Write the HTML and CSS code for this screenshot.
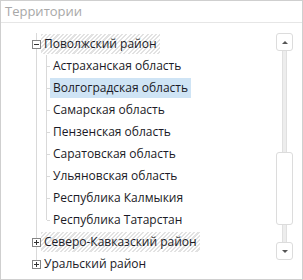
FILE: index.html
```html
<!DOCTYPE html>
<html lang="ru">
<head>
    <meta charset="UTF-8">
    <meta name="viewport" content="width=device-width, initial-scale=1.0">
    <title>Территории</title>
    <link rel="stylesheet" href="styles.css">
</head>
<body>
    <div class="panel">
        <div class="panel-title">Территории</div>
        <div class="panel-body">
            <div class="tree">
                <ul class="tree-root">
                    <li class="node">
                        <div class="row"><span class="toggle minus"></span><span class="label group">Поволжский район</span></div>
                        <ul class="tree-children">
                            <li class="leaf"><div class="row"><span class="label">Астраханская область</span></div></li>
                            <li class="leaf"><div class="row"><span class="label selected">Волгоградская область</span></div></li>
                            <li class="leaf"><div class="row"><span class="label">Самарская область</span></div></li>
                            <li class="leaf"><div class="row"><span class="label">Пензенская область</span></div></li>
                            <li class="leaf"><div class="row"><span class="label">Саратовская область</span></div></li>
                            <li class="leaf"><div class="row"><span class="label">Ульяновская область</span></div></li>
                            <li class="leaf"><div class="row"><span class="label">Республика Калмыкия</span></div></li>
                            <li class="leaf"><div class="row"><span class="label">Республика Татарстан</span></div></li>
                        </ul>
                    </li>
                    <li class="node">
                        <div class="row"><span class="toggle plus"></span><span class="label group">Северо-Кавказский район</span></div>
                    </li>
                    <li class="node">
                        <div class="row"><span class="toggle plus"></span><span class="label">Уральский район</span></div>
                    </li>
                </ul>
            </div>
            <div class="scrollbar">
                <div class="sb-btn"><span class="arrow-up"></span></div>
                <div class="sb-track"><div class="sb-thumb"></div></div>
                <div class="sb-btn"><span class="arrow-down"></span></div>
            </div>
        </div>
    </div>
</body>
</html>
```

FILE: styles.css
```css
body {
    margin: 0;
    padding: 0;
    font-family: "Open Sans", Arial, sans-serif;
    font-size: 12px;
    color: #1a1a26;
    background-color: #fff;
}
.panel {
    width: 303px;
    height: 280px;
    box-sizing: border-box;
    border: 1px solid #cfcfcf;
    display: flex;
    flex-direction: column;
}
.panel-title {
    height: 21px;
    line-height: 21px;
    padding-left: 4px;
    font-size: 13px;
    color: #a8a8a8;
    border-bottom: 1px solid #e6e6e6;
}
.panel-body {
    flex: 1;
    display: flex;
    padding-top: 10px;
    overflow: hidden;
}
.tree {
    flex: 1;
    padding-left: 35px;
}
.tree ul {
    list-style: none;
    margin: 0;
    padding: 0;
}
.node,
.leaf {
    border-left: 1px solid #d9d9d9;
}
.node:last-child,
.leaf:last-child {
    border-left-color: transparent;
    background: linear-gradient(#d9d9d9, #d9d9d9) no-repeat 0 0 / 1px 11px;
    background-origin: border-box;
}
.tree .tree-children {
    margin-left: 9px;
}
.row {
    height: 22px;
    display: flex;
    align-items: center;
    white-space: nowrap;
}
.leaf .row::before {
    content: "";
    flex: none;
    width: 3px;
    height: 1px;
    background-color: #d9d9d9;
}
.toggle {
    width: 7px;
    height: 7px;
    margin-left: -5px;
    border: 1px solid #858585;
    background-color: #fff;
}
.toggle.minus {
    background: #fff linear-gradient(#333, #333) no-repeat center / 5px 1px;
}
.toggle.plus {
    background:
        linear-gradient(#333, #333) no-repeat center / 5px 1px,
        linear-gradient(#333, #333) no-repeat center / 1px 5px,
        #fff;
}
.label {
    height: 20px;
    line-height: 20px;
    padding: 0 3px;
}
.label.group {
    background: repeating-linear-gradient(135deg, #e2e2e2 0 1.5px, #fff 1.5px 3px);
}
.label.selected {
    background-color: #cfe4f5;
}
.scrollbar {
    width: 17px;
    margin-right: 9px;
    display: flex;
    flex-direction: column;
    align-items: center;
}
.sb-btn {
    width: 15px;
    height: 16px;
    border: 1px solid #dcdcdc;
    border-radius: 3px;
    background-color: #fff;
    display: flex;
    align-items: center;
    justify-content: center;
}
.arrow-up {
    border-left: 3px solid transparent;
    border-right: 3px solid transparent;
    border-bottom: 3px solid #555;
}
.arrow-down {
    border-left: 3px solid transparent;
    border-right: 3px solid transparent;
    border-top: 3px solid #555;
}
.sb-track {
    width: 5px;
    height: 191px;
    padding-top: 101px;
    box-sizing: border-box;
    background-color: #ededed;
    border-left: 1px solid #e0e0e0;
    border-right: 1px solid #e0e0e0;
    display: flex;
    flex-direction: column;
    align-items: center;
}
.sb-thumb {
    flex: none;
    width: 15px;
    height: 71px;
    border: 1px solid #dcdcdc;
    border-radius: 3px;
    background-color: #fff;
}
```
